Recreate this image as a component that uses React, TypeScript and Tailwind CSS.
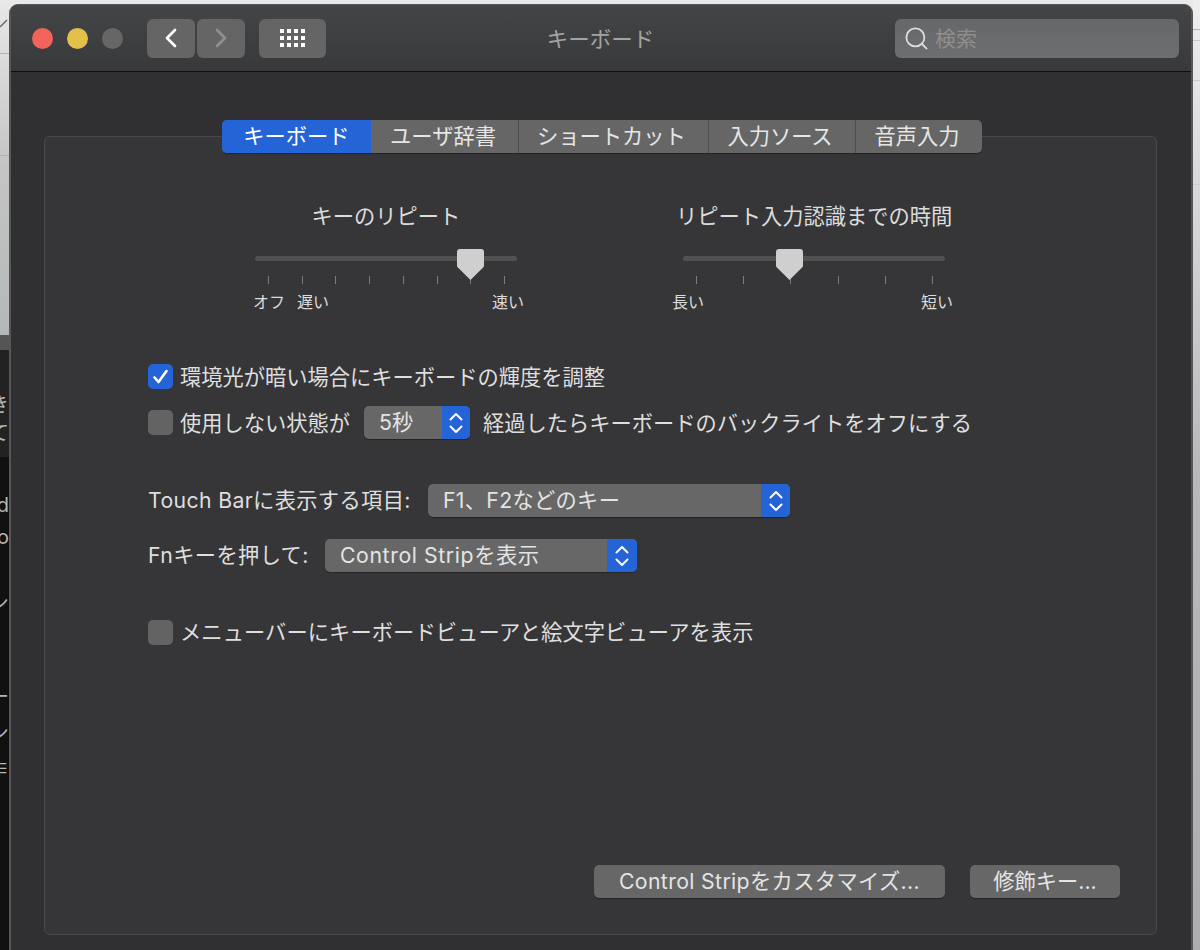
import { ChevronLeft, ChevronRight, Search } from 'lucide-react';

const Stepper = () => (
  <svg width="16" height="24" viewBox="0 0 16 24" fill="none" stroke="white" strokeWidth="2" strokeLinecap="round" strokeLinejoin="round">
    <path d="M2.5 8.5 8 3l5.5 5.5" />
    <path d="M2.5 15.5 8 21l5.5-5.5" />
  </svg>
);

const Select = ({ label, width, blue = 29, tracking = '' }: { label: string; width: string; blue?: number; tracking?: string }) => (
  <div className={`flex h-[33px] ${width} shrink-0 items-stretch overflow-hidden rounded-[5px] bg-[#676767] shadow-[0_1px_1px_rgba(0,0,0,0.35)]`}>
    <span className={`flex flex-1 items-center pb-[1px] pl-[15px] text-[#e4e4e4] whitespace-nowrap ${tracking}`}>{label}</span>
    <span className="flex items-center justify-center bg-[#2464d6]" style={{ width: blue }}>
      <Stepper />
    </span>
  </div>
);

const Checkbox = ({ checked = false }: { checked?: boolean }) => (
  <span className={`flex h-[25px] w-[25px] shrink-0 items-center justify-center rounded-[5px] ${checked ? 'bg-[#2464d6]' : 'bg-[#636363]'}`}>
    {checked && (
      <svg width="19" height="19" viewBox="0 0 19 19" fill="none" stroke="white" strokeWidth="2.6" strokeLinecap="round" strokeLinejoin="round">
        <path d="M3.5 10.5 7.5 15 15.5 4" />
      </svg>
    )}
  </span>
);

const Slider = ({
  title,
  ticks,
  thumb,
  labels,
}: {
  title: string;
  ticks: number;
  thumb: string;
  labels: React.ReactNode;
}) => (
  <div className="flex w-[262px] flex-col">
    <div className="flex h-[30px] justify-center whitespace-nowrap text-[#dcdcdc]">{title}</div>
    <div className="relative mt-[25px]">
      <div className="h-[5px] rounded-full bg-[#515151]" />
      <svg className={`absolute top-[-7px] ${thumb}`} width="27" height="31" viewBox="0 0 27 31">
        <path d="M3 0h21a3 3 0 0 1 3 3v13.500a3 3 0 0 1-.9 2.100L13.500 31 .9 18.600A3 3 0 0 1 0 16.500V3a3 3 0 0 1 3-3z" fill="#cfcfcf" />
      </svg>
      <div className="mt-[15px] flex justify-between pl-[13px] pr-[12px]">
        {Array.from({ length: ticks }).map((_, i) => (
          <span key={i} className="h-[8px] w-px bg-[#7b7b7b]" />
        ))}
      </div>
    </div>
    {labels}
  </div>
);

const Fragment = ({ text, className }: { text: string; className: string }) => (
  <div className={`flex h-[30px] w-[9px] justify-end overflow-hidden text-[20px] leading-[30px] text-[#b5b5b5] ${className}`}>
    <span className="shrink-0">{text}</span>
  </div>
);

export default function App() {
  return (
    <div
      className="flex h-[950px] w-[1200px] overflow-hidden bg-[#e9e9e9] text-[21.25px] leading-[30px]"
      style={{ fontFamily: '"Inter", "Noto Sans CJK JP", sans-serif' }}
    >
      {/* desktop behind the window */}
      <div className="flex h-full w-[9px] shrink-0 flex-col bg-[#111111]">
        <div className="flex h-[335px] flex-col bg-gradient-to-b from-[#e8e8e8] via-[#c4c4c4] to-[#b4b8b8]">
          <svg className="mt-[18px]" width="9" height="10" viewBox="0 0 9 10" fill="none" stroke="#666666" strokeWidth="1.500">
            <path d="M0 9 7 2" />
          </svg>
          <div className="mt-[25px] h-px bg-[#a9b6b8]" />
          <div className="mt-[101px] h-px bg-[#a9b6b8]" />
        </div>
        <div className="h-[15px] bg-[#555555]" />
        <div className="flex h-[107px] flex-col bg-[#222222] pt-[40px]">
          <Fragment text="き" className="" />
          <Fragment text="て" className="-mt-[2px]" />
        </div>
        <div className="flex flex-col pt-[33px]">
          <Fragment text="d" className="" />
          <Fragment text="o" className="mt-[2px]" />
          <Fragment text="シ" className="mt-[36px]" />
          <Fragment text="ー" className="mt-[64px]" />
          <Fragment text="シ" className="mt-[6px]" />
          <Fragment text="≡" className="mt-[6px]" />
        </div>
      </div>

      {/* window */}
      <div className="mt-[4px] flex h-[960px] w-[1184px] shrink-0 flex-col overflow-hidden rounded-t-[9px] border-x-2 border-t border-[#565658] bg-[#303032]">
        <div className="flex h-[67px] shrink-0 items-center border-b border-[#0f0f0f] bg-gradient-to-b from-[#444547] to-[#38393b] pl-[21px] pr-[12px]">
          <span className="h-[21px] w-[21px] rounded-full bg-[#f2635c]" />
          <span className="ml-[14px] h-[21px] w-[21px] rounded-full bg-[#e3c04a]" />
          <span className="ml-[14px] h-[21px] w-[21px] rounded-full bg-[#666666]" />
          <div className="ml-[24px] flex gap-[2px]">
            <span className="flex h-[39px] w-[48px] items-center justify-center rounded-[6px] bg-[#656565]">
              <ChevronLeft size={32} strokeWidth={2} className="text-white" />
            </span>
            <span className="flex h-[39px] w-[48px] items-center justify-center rounded-[6px] bg-[#656565]">
              <ChevronRight size={32} strokeWidth={2} className="text-[#8f8f8f]" />
            </span>
          </div>
          <span className="ml-[14px] flex h-[39px] w-[67px] items-center justify-center rounded-[6px] bg-[#656565]">
            <span className="grid grid-cols-4 gap-x-[3px] gap-y-[3px]">
              {Array.from({ length: 12 }).map((_, i) => (
                <span key={i} className="h-[4px] w-[4px] bg-white" />
              ))}
            </span>
          </span>
          <span className="flex-1 pr-[20px] pt-[2px] text-center text-[21.5px] text-[#a4a4a4]">キーボード</span>
          <div className="flex h-[39px] w-[284px] items-center rounded-[6px] bg-gradient-to-b from-[#666768] to-[#6d6e6f] pl-[8px]">
            <Search size={27} strokeWidth={1.6} className="text-[#dcdcdc]" />
            <span className="ml-[5px] pt-[1px] text-[21px] text-[#8e8e8e]">検索</span>
          </div>
        </div>

        <div className="pl-[33px] pt-[64px]">
          <div className="flex h-[799px] w-[1113px] flex-col rounded-[6px] border border-[#4a4a4c] bg-[#363638]">
            <div className="relative -mt-[17px] ml-[177px] flex h-[33px] w-[760px] overflow-hidden rounded-[5px] bg-[#666666] pb-0 text-[#e6e6e6] shadow-[0_1px_1px_rgba(0,0,0,0.35)]">
              <span className="flex w-[149px] items-center justify-center bg-[#2464d6] pb-[1px] text-white">キーボード</span>
              <span className="flex w-[148px] items-center justify-center border-r border-[#4e4e4e] pb-[1px] pr-[3px]">ユーザ辞書</span>
              <span className="flex w-[190px] items-center justify-center border-r border-[#4e4e4e] pb-[1px] pr-[4px]">ショートカット</span>
              <span className="flex w-[147px] items-center justify-center border-r border-[#4e4e4e] pb-[1px] pr-[4px]">入力ソース</span>
              <span className="flex w-[126px] items-center justify-center pb-[1px] pr-[4px]">音声入力</span>
            </div>

            <div className="ml-[210px] mt-[48px] flex gap-[166px]">
              <Slider
                title="キーのリピート"
                ticks={8}
                thumb="left-[202px]"
                labels={
                  <div className="-ml-[2px] mt-[3px] flex h-[30px] w-[271px] items-center text-[16px] text-[#dcdcdc]">
                    <span>オフ</span>
                    <span className="ml-[12px]">遅い</span>
                    <span className="ml-auto">速い</span>
                  </div>
                }
              />
              <Slider
                title="リピート入力認識までの時間"
                ticks={6}
                thumb="left-[93px]"
                labels={
                  <div className="-ml-[11px] mt-[3px] flex h-[30px] w-[281px] items-center justify-between text-[16px] text-[#dcdcdc]">
                    <span>長い</span>
                    <span>短い</span>
                  </div>
                }
              />
            </div>

            <div className="ml-[103px] mt-[43px] flex flex-col text-[#dfdfdf]">
              <div className="flex h-[33px] items-center gap-[7px]">
                <Checkbox checked />
                <span>環境光が暗い場合にキーボードの輝度を調整</span>
              </div>
              <div className="mt-[13px] flex h-[33px] items-center">
                <Checkbox />
                <span className="ml-[7px]">使用しない状態が</span>
                <span className="ml-[14px]">
                  <Select label="5秒" width="w-[106px]" blue={28} />
                </span>
                <span className="ml-[13px]">経過したらキーボードのバックライトをオフにする</span>
              </div>
              <div className="mt-[45px] flex h-[33px] items-center">
                <span className="w-[280px] whitespace-nowrap pb-[1px] tracking-[0.35px]">Touch Barに表示する項目:</span>
                <Select label="F1、F2などのキー" width="w-[362px]" tracking="tracking-[0.3px]" />
              </div>
              <div className="mt-[22px] flex h-[33px] items-center">
                <span className="w-[177px] whitespace-nowrap pb-[1px] tracking-[0.36px]">Fnキーを押して:</span>
                <Select label="Control Stripを表示" width="w-[312px]" blue={30} tracking="tracking-[0.6px]" />
              </div>
              <div className="mt-[44px] flex h-[33px] items-center gap-[7px]">
                <Checkbox />
                <span className="pb-[1px] tracking-[0.08px]">メニューバーにキーボードビューアと絵文字ビューアを表示</span>
              </div>
            </div>

            <div className="mt-[216px] flex justify-end gap-[25px] pr-[36px] text-[#e4e4e4]">
              <span className="flex h-[33px] w-[351px] items-center justify-center rounded-[5px] bg-[#676767] pb-[1px] tracking-[0.36px] shadow-[0_1px_1px_rgba(0,0,0,0.35)]">Control Stripをカスタマイズ...</span>
              <span className="flex h-[33px] w-[150px] items-center justify-center rounded-[5px] bg-[#676767] pb-[1px] shadow-[0_1px_1px_rgba(0,0,0,0.35)]">修飾キー...</span>
            </div>
          </div>
        </div>
      </div>

      {/* desktop on the right */}
      <div className="flex h-full flex-1 flex-col bg-gradient-to-b from-[#eeeeee] via-[#b8b8b8] to-[#adadad]">
        <div className="mt-[29px] h-px bg-[#a9b6b8]" />
        <div className="mt-[10px] h-px bg-[#c8cccc]" />
        <div className="mt-[39px] h-px bg-[#c8cccc]" />
        <div className="mt-[103px] h-px bg-[#c8cccc]" />
      </div>
    </div>
  );
}
